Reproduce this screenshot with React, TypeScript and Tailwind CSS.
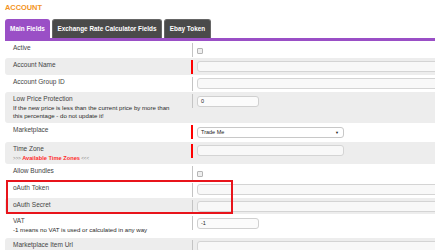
import React from 'react';

type Row = {
  label: string;
  sub?: React.ReactNode;
  field: 'checkbox' | 'input' | 'short' | 'select';
  value?: string;
  required?: boolean;
  gray?: boolean;
  h: string;
};

const rows: Row[] = [
  { label: 'Active', field: 'checkbox', h: 'h-[17px]' },
  { label: 'Account Name', field: 'input', required: true, gray: true, h: 'h-[17px]' },
  { label: 'Account Group ID', field: 'input', h: 'h-[17px]' },
  {
    label: 'Low Price Protection',
    sub: (
      <>
        If the new price is less than the current price by more than
        <br />
        this percentage - do not update it!
      </>
    ),
    field: 'short',
    value: '0',
    gray: true,
    h: 'h-[31px]',
  },
  { label: 'Marketplace', field: 'select', value: 'Trade Me', required: true, h: 'h-[19px]' },
  {
    label: 'Time Zone',
    sub: (
      <span>
        <span className="text-[4.5px] text-[#888]">&gt;&gt;&gt; </span>
        <span className="text-[5.7px] font-bold text-[#ff2a2a]">Available Time Zones</span>
        <span className="text-[4.5px] text-[#888]"> &lt;&lt;&lt;</span>
      </span>
    ),
    field: 'input',
    required: true,
    gray: true,
    h: 'h-[22px]',
  },
  { label: 'Allow Bundles', field: 'checkbox', h: 'h-[17px]' },
  { label: 'oAuth Token', field: 'input', h: 'h-[17px]' },
  { label: 'oAuth Secret', field: 'input', gray: true, h: 'h-[16px]' },
  {
    label: 'VAT',
    sub: '-1 means no VAT is used or calculated in any way',
    field: 'short',
    value: '-1',
    h: 'h-[24px]',
  },
  { label: 'Marketplace Item Url', field: 'input', gray: true, h: 'h-[20px]' },
];

function Field({ row }: { row: Row }) {
  if (row.field === 'checkbox') {
    return <span className="mt-[7px] block h-[6px] w-[6px] rounded-[1px] border border-[#b5b5b5] bg-[#efefef]" />;
  }
  if (row.field === 'select') {
    return (
      <div className="mt-[4px] flex h-[11px] w-[147px] items-center justify-between rounded-[3px] border border-[#c8c8c8] bg-white pl-[3px] pr-[4px] text-[5.5px] text-[#222]">
        <span>{row.value}</span>
        <span className="text-[4px]">▼</span>
      </div>
    );
  }
  if (row.field === 'short') {
    return (
      <div className="mt-[4px] flex h-[11px] w-[62px] items-center rounded-[3px] border border-[#d0d0d0] bg-[#fbfbfb] pl-[3px] text-[5.5px] text-[#222]">
        {row.value}
      </div>
    );
  }
  const w = row.label === 'Time Zone' ? 'w-[147px]' : 'w-[260px]';
  return <div className={`mt-[3px] h-[11px] ${w} rounded-[3px] border border-[#d4d4d4] bg-[#f8f8f8]`} />;
}

export default function App() {
  return (
    <div className="relative h-[250px] w-[435px] overflow-hidden bg-white pl-[5px] font-['Liberation_Sans',Arial,sans-serif]">
      <div className="pt-[3px] text-[7.4px] font-bold leading-[9px] text-[#f39322]">ACCOUNT</div>

      <div className="mt-[7px] flex h-[19px] gap-[2px]">
        <div className="flex w-[45px] items-center justify-center rounded-t-[3px] bg-[#9a4fc6] text-[6.4px] font-bold text-white">
          Main Fields
        </div>
        <div className="flex w-[110px] items-center justify-center rounded-t-[3px] border border-b-0 border-[#666] bg-[#4a4a4a] text-[6.4px] font-bold text-white">
          Exchange Rate Calculator Fields
        </div>
        <div className="flex w-[47px] items-center justify-center rounded-t-[3px] border border-b-0 border-[#666] bg-[#4a4a4a] text-[6.4px] font-bold text-white">
          Ebay Token
        </div>
      </div>
      <div className="h-[3px] bg-[#9a4fc6]" />

      <div className="flex flex-col">
        {rows.map((row) => (
          <div
            key={row.label}
            className={`flex ${row.h} rounded-l-[3px] ${row.gray ? 'bg-[#ededed]' : 'bg-white'}`}
          >
            <div className="w-[186px] shrink-0 pl-[8px] pt-[3px] text-[#444]">
              <div className="text-[6.5px] leading-[8px]">{row.label}</div>
              {row.sub && <div className="mt-[1px] text-[6.1px] leading-[8px] text-[#2a2a2a]">{row.sub}</div>}
            </div>
            <div
              className={`mt-[2px] h-[14px] shrink-0 ${row.required ? 'w-[2px] bg-[#ff0000]' : 'ml-[1px] w-[1px] bg-[#c4c4c4]'}`}
            />
            <div className="pl-[4px]">
              <Field row={row} />
            </div>
          </div>
        ))}
      </div>

      <div className="absolute left-[6px] top-[180px] h-[34px] w-[227px] border-2 border-[#e8141b]" />
    </div>
  );
}
